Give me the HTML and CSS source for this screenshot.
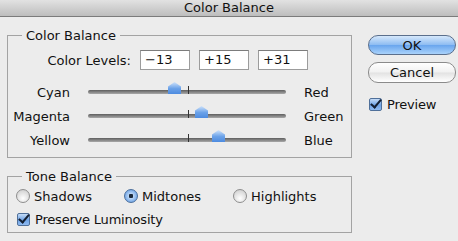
FILE: index.html
```html
<!DOCTYPE html>
<html>
    <head>
    <title>Color Balance</title>
    <link rel="stylesheet" href="styles.css">
    </head>
    <body>
        <div class="titlebar">Color Balance</div>
        <div class="dialog">
            <div class="panels">
                <fieldset class="group levels">
                    <legend>Color Balance</legend>
                    <div class="levelsRow">
                        <span class="levelsLabel">Color Levels:</span>
                        <span class="field">&minus;13</span>
                        <span class="field">+15</span>
                        <span class="field">+31</span>
                    </div>

                    <div class="sliderRow">
                        <span class="leftName">Cyan</span>
                        <div class="track"><span class="tick"></span><span class="thumb" style="left:80px"></span></div>
                        <span class="rightName">Red</span>
                    </div>
                    <div class="sliderRow">
                        <span class="leftName">Magenta</span>
                        <div class="track"><span class="tick"></span><span class="thumb" style="left:107px"></span></div>
                        <span class="rightName">Green</span>
                    </div>
                    <div class="sliderRow">
                        <span class="leftName">Yellow</span>
                        <div class="track"><span class="tick"></span><span class="thumb" style="left:124px"></span></div>
                        <span class="rightName">Blue</span>
                    </div>
                </fieldset>

                <fieldset class="group tone">
                    <legend>Tone Balance</legend>
                    <div class="radioRow">
                        <span class="option"><span class="radio"></span>Shadows</span>
                        <span class="option"><span class="radio on"></span>Midtones</span>
                        <span class="option"><span class="radio"></span>Highlights</span>
                    </div>
                    <div class="checkRow">
                        <span class="check"></span>Preserve Luminosity
                    </div>
                </fieldset>
            </div>

            <div class="actions">
                <button class="button ok">OK</button>
                <button class="button cancel">Cancel</button>
                <div class="checkRow preview">
                    <span class="check"></span>Preview
                </div>
            </div>
        </div>
    </body>
</html>
```

FILE: styles.css
```css
body{
    margin: 0;
    width: 458px;
    height: 241px;
    overflow: hidden;
    background-color: #ececec;
    font-family: "DejaVu Sans", sans-serif;
    font-size: 12px;
    color: #111;
}
.titlebar{
    height: 16px;
    line-height: 16px;
    text-align: center;
    font-size: 13px;
    color: #111;
    background: linear-gradient(#e2e2e2, #bdbdbd);
    border-bottom: 1px solid #7b7b7b;
}
.dialog{
    display: flex;
    padding: 11px 0 0 7px;
}
.panels{
    width: 345px;
}
.group{
    margin: 0;
    padding: 0;
    border: 1px solid #a3a3a3;
    min-width: 0;
}
.group legend{
    margin-left: 14px;
    padding: 0 4px;
    line-height: 15px;
    font-size: 13px;
}
.levelsRow{
    display: flex;
    align-items: center;
    margin-top: 7px;
}
.levelsLabel{
    width: 123px;
    margin-right: 9px;
    text-align: right;
    font-size: 13px;
}
.field{
    box-sizing: border-box;
    width: 50px;
    height: 20px;
    margin-right: 9px;
    padding: 0 4px;
    line-height: 18px;
    font-size: 13px;
    background-color: #fff;
    border: 1px solid #9c9c9c;
    border-top-color: #7c7c7c;
}
.sliderRow{
    display: grid;
    grid-template-columns: 62px 198px auto;
    column-gap: 18px;
    align-items: center;
    height: 24px;
    font-size: 13px;
}
.levels{
    padding-bottom: 5px;
}
.levelsRow + .sliderRow{
    margin-top: 10px;
}
.leftName{
    text-align: right;
}
.track{
    position: relative;
    height: 4px;
    border-radius: 2px;
    background: linear-gradient(#5e5e5e, #a9a9a9);
}
.tick{
    position: absolute;
    left: 100px;
    top: -4px;
    width: 1px;
    height: 8px;
    background-color: #333;
}
.thumb{
    position: absolute;
    top: -8px;
    width: 13px;
    height: 12px;
    background: linear-gradient(#cfe3fb, #6aa1e8 55%, #4d8be0);
    clip-path: polygon(50% 0, 100% 38%, 100% 100%, 0 100%, 0 38%);
    filter: drop-shadow(0 0 0.5px #2b4c7a);
}
.tone{
    margin-top: 11px;
    padding-bottom: 5px;
}
.radioRow{
    display: grid;
    grid-template-columns: 108px 109px auto;
    margin: 4px 0 0 8px;
    height: 16px;
    font-size: 13px;
}
.option{
    display: flex;
    align-items: center;
}
.radio{
    box-sizing: border-box;
    width: 14px;
    height: 14px;
    margin-right: 4px;
    border-radius: 50%;
    border: 1px solid #8e8e8e;
    background: radial-gradient(circle at 50% 70%, #ffffff, #d9d9d9 70%, #c4c4c4);
}
.radio.on{
    border-color: #4a6e9c;
    background: radial-gradient(circle, #1b2a3c 0 2px, #b8d4f5 2.5px, #6da3e6 80%);
}
.checkRow{
    display: flex;
    align-items: center;
    height: 16px;
    margin: 7px 0 0 9px;
    font-size: 13px;
    letter-spacing: -0.2px;
}
.check{
    position: relative;
    box-sizing: border-box;
    width: 13px;
    height: 13px;
    margin-right: 5px;
    border: 1px solid #50709a;
    border-radius: 2px;
    background: linear-gradient(#c5dcf7, #6fa3e6 55%, #8fbaf0);
}
.check::after{
    content: "";
    position: absolute;
    left: 3px;
    top: -2px;
    width: 4px;
    height: 9px;
    border: solid #142033;
    border-width: 0 2px 2px 0;
    transform: rotate(40deg);
}
.actions{
    display: flex;
    flex-direction: column;
    width: 88px;
    margin: 7px 0 0 16px;
}
.button{
    box-sizing: border-box;
    height: 20px;
    padding: 0;
    border-radius: 10px;
    font-family: "DejaVu Sans", sans-serif;
    font-size: 13px;
    color: #111;
}
.ok{
    border: 1px solid #5b6f8c;
    background: linear-gradient(#d6e8fb, #8fbdf2 48%, #6aa6ee 52%, #a9d2fb);
}
.cancel{
    height: 21px;
    margin-top: 7px;
    border: 1px solid #8b8b8b;
    background: linear-gradient(#ffffff, #f1f1f1 48%, #e2e2e2 52%, #ffffff);
}
.preview{
    margin: 13px 0 0 1px;
}
```
